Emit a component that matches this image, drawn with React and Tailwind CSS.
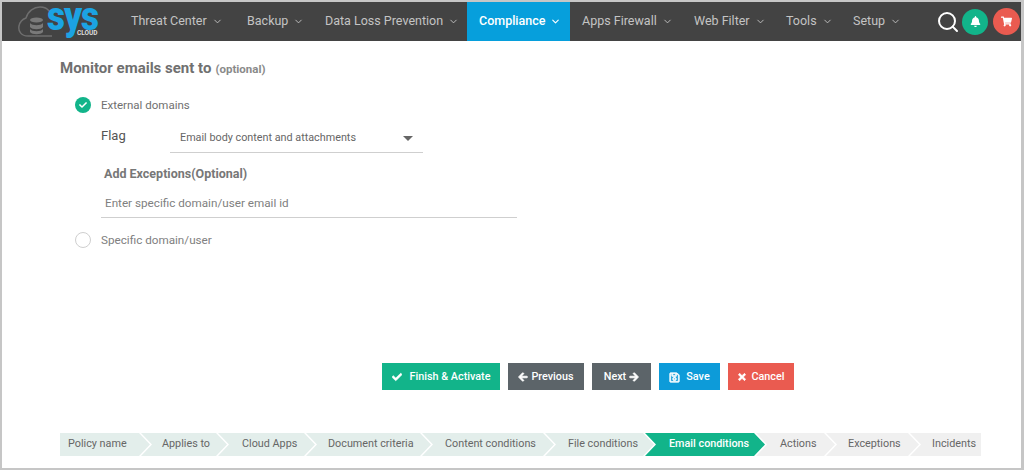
import React from 'react';
import { Search, ChevronDown } from 'lucide-react';
import { FaBell, FaShoppingCart, FaCheck, FaArrowLeft, FaArrowRight, FaRegSave, FaTimes } from 'react-icons/fa';

const menu = [
  { label: 'Threat Center', cls: 'ml-[11px] w-[116px]' },
  { label: 'Backup', cls: 'w-[78px]' },
  { label: 'Data Loss Prevention', cls: 'w-[142px]' },
  { label: 'Compliance', cls: 'w-[103px] pl-[12px] bg-[#069fdc] text-white font-medium', active: true },
  { label: 'Apps Firewall', cls: 'ml-[12px] w-[112px]' },
  { label: 'Web Filter', cls: 'w-[92px]' },
  { label: 'Tools', cls: 'w-[67px]' },
  { label: 'Setup', cls: 'w-[83px]' },
];

const notched = '[clip-path:polygon(0_0,calc(100%-11px)_0,100%_50%,calc(100%-11px)_100%,0_100%,11px_50%)]';

const steps = [
  { label: 'Policy name', cls: 'w-[90px] pl-[8px] bg-[#e3eeeb] text-[#666] [clip-path:polygon(0_0,calc(100%-11px)_0,100%_50%,calc(100%-11px)_100%,0_100%)]' },
  { label: 'Applies to', cls: `w-[86px] pl-[21px] bg-[#e3eeeb] text-[#666] ${notched}` },
  { label: 'Cloud Apps', cls: `w-[97px] pl-[24px] bg-[#e3eeeb] text-[#666] ${notched}` },
  { label: 'Document criteria', cls: `w-[125px] pl-[22px] bg-[#e3eeeb] text-[#666] ${notched}` },
  { label: 'Content conditions', cls: `w-[132px] pl-[23px] bg-[#e3eeeb] text-[#666] ${notched}` },
  { label: 'File conditions', cls: `w-[109px] pl-[23px] bg-[#e3eeeb] text-[#666] ${notched}` },
  { label: 'Email conditions', cls: `w-[120px] pl-[24px] bg-[#12b48a] text-white font-medium ${notched}` },
  { label: 'Actions', cls: `w-[79px] pl-[24px] bg-[#f0f0f0] text-[#666] ${notched}` },
  { label: 'Exceptions', cls: `w-[93px] pl-[22px] bg-[#f0f0f0] text-[#666] ${notched}` },
  { label: 'Incidents', cls: 'w-[71px] pl-[22px] bg-[#f0f0f0] text-[#666] [clip-path:polygon(0_0,100%_0,100%_100%,0_100%,11px_50%)]' },
];

const Logo = () => (
  <div className="relative w-[102px] h-full shrink-0 ml-[16px]">
    <svg className="absolute left-0 top-[3px]" width="50" height="36" viewBox="0 0 50 36" fill="none">
      <path d="M10 31 C3 31 0 26 1 21 C2 16 5 14 8 13 C10 6 16 2 22 2 C26 2 29 3 31 6" stroke="#6e6e6e" strokeWidth="1.5" />
      <path d="M10 31 H34" stroke="#6e6e6e" strokeWidth="1.5" />
      <ellipse cx="18.5" cy="15" rx="6.5" ry="2.5" fill="#7a7a7a" />
      <path d="M12 18 C14 21 23 21 25 18 V22 C23 25 14 25 12 22 Z" fill="#7a7a7a" />
      <path d="M12 24 C14 27 23 27 25 24 V27 C23 30 14 30 12 27 Z" fill="#7a7a7a" />
    </svg>
    <span className="absolute left-[29px] top-[3px] text-[35px] leading-[24px] font-black text-[#1ba3e3] tracking-[-1px] scale-y-115">sys</span>
    <span className="absolute left-[59px] top-[28px] text-[6.5px] leading-[7px] font-bold text-[#ddd]">CLOUD</span>
  </div>
);

const NavItem = ({ label, cls, active }) => (
  <div className={`flex items-center h-full gap-[5px] shrink-0 whitespace-nowrap text-[12.5px] text-[#c4c4c4] ${cls}`}>
    <span>{label}</span>
    <ChevronDown size={11} strokeWidth={active ? 2.5 : 2} />
  </div>
);

const Btn = ({ cls, children }) => (
  <button className={`flex items-center justify-center h-[27px] pt-[1px] text-[10.8px] font-medium text-white ${cls}`}>
    {children}
  </button>
);

const App = () => {
  return (
    <div className="w-[1024px] h-[470px] overflow-hidden bg-white border-2 border-r-[3px] border-[#c6c6c6] flex flex-col font-['Roboto',sans-serif]">
      <header className="h-[39px] shrink-0 bg-[#434343] flex items-center">
        <Logo />
        {menu.map((m) => (
          <NavItem key={m.label} {...m} />
        ))}
        <Search size={24} strokeWidth={2} className="text-white" />
        <div className="ml-[2px] w-[26px] h-[26px] rounded-full bg-[#12b48a] flex items-center justify-center text-white">
          <FaBell size={11} />
        </div>
        <div className="ml-[5px] w-[27px] h-[27px] rounded-full bg-[#ea5b50] flex items-center justify-center text-white">
          <FaShoppingCart size={11} />
        </div>
      </header>

      <main className="flex-1 flex flex-col pl-[58px]">
        <h2 className="mt-[18px] flex items-baseline text-[15px] leading-[18px] font-bold text-[#707070]">
          Monitor emails sent to
          <span className="ml-[4px] text-[11.5px] text-[#8a8a8a]">(optional)</span>
        </h2>

        <div className="mt-[19px] ml-[15px] flex items-center gap-[10px] text-[11.5px] leading-[16px] text-[#707070]">
          <span className="w-[16px] h-[16px] rounded-full bg-[#12b48a] flex items-center justify-center text-white">
            <FaCheck size={8} />
          </span>
          External domains
        </div>

        <div className="mt-[5px] ml-[41px] flex items-center h-[35px]">
          <span className="w-[69px] text-[13px] text-[#555]">Flag</span>
          <div className="w-[253px] h-full pt-[6px] border-b border-[#cfcfcf] flex items-center justify-between pl-[10px] pr-[10px] text-[10.8px] text-[#666]">
            Email body content and attachments
            <span className="w-0 h-0 border-x-[5px] border-x-transparent border-t-[5px] border-t-[#666]" />
          </div>
        </div>

        <div className="mt-[13px] ml-[44px] text-[12.5px] leading-[16px] font-bold text-[#777]">Add Exceptions(Optional)</div>

        <div className="mt-[8px] ml-[41px] w-[416px] h-[28px] pl-[4px] pt-[1px] border-b border-[#cfcfcf] flex items-center text-[11.7px] text-[#808080]">
          Enter specific domain/user email id
        </div>

        <div className="mt-[14px] ml-[15px] flex items-center gap-[10px] text-[11.7px] leading-[16px] text-[#808080]">
          <span className="w-[16px] h-[16px] rounded-full border border-[#cfcfcf] bg-white" />
          Specific domain/user
        </div>

        <div className="mt-[115px] ml-[322px] flex gap-[8px]">
          <Btn cls="w-[118px] gap-[8px] bg-[#12b48a]"><FaCheck size={10} className="stroke-[30]" />Finish &amp; Activate</Btn>
          <Btn cls="w-[76px] gap-[3px] bg-[#5c6469]"><FaArrowLeft size={10} className="stroke-[40]" />Previous</Btn>
          <Btn cls="w-[59px] gap-[3px] bg-[#5c6469]">Next<FaArrowRight size={10} className="stroke-[40]" /></Btn>
          <Btn cls="w-[61px] gap-[6px] bg-[#0d9bd9]"><FaRegSave size={11} className="stroke-[30]" />Save</Btn>
          <Btn cls="w-[66px] gap-[4px] bg-[#ea5b50]"><FaTimes size={10} className="stroke-[40]" />Cancel</Btn>
        </div>

        <nav className="mt-[43px] flex h-[23px] text-[10.8px]">
          {steps.map((s) => (
            <div key={s.label} className={`shrink-0 -mr-[9px] flex items-center whitespace-nowrap ${s.cls}`}>
              {s.label}
            </div>
          ))}
        </nav>
      </main>
    </div>
  );
};

export default App;
